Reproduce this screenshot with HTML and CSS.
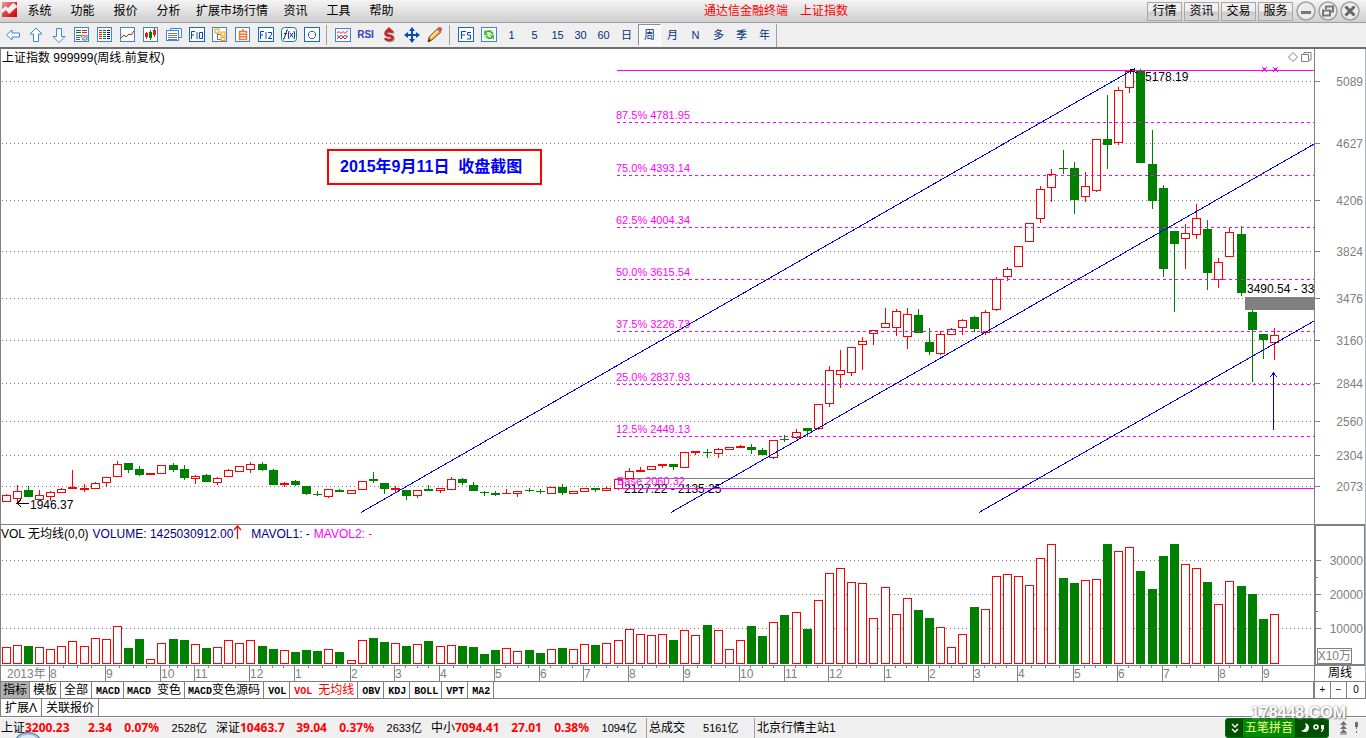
FILE: index.html
```html
<!DOCTYPE html>
<html lang="zh-CN">
<head>
<meta charset="utf-8">
<title>通达信金融终端 上证指数</title>
<link rel="stylesheet" href="styles.css">
</head>
<body>
<div class="app">
  <header class="menubar">
    <svg class="logo" width="16" height="16" viewBox="0 0 16 16"><defs><linearGradient id="lg" x1="0" y1="0" x2="1" y2="1"><stop offset="0" stop-color="#e8a0a0"/><stop offset=".5" stop-color="#d84040"/><stop offset="1" stop-color="#d00000"/></linearGradient></defs><rect width="15" height="15" fill="url(#lg)"/><path d="M0 7l4-3 2 2 5-5h4v4L7 12 4 8l-4 3z" fill="#f6eeee"/><path d="M12 1h3v3z" fill="#d42020"/></svg>
    <nav class="menu">
      <button>系统</button><button>功能</button><button>报价</button><button>分析</button><button class="wide">扩展市场行情</button><button>资讯</button><button>工具</button><button>帮助</button>
    </nav>
    <h1 class="title"><span>通达信金融终端</span><span>上证指数</span></h1>
    <div class="quick"><button>行情</button><button>资讯</button><button>交易</button><button>服务</button></div>
    <div class="winbtns">
      <button aria-label="最小化"><svg width="20" height="20" viewBox="0 0 20 20"><circle cx="10" cy="10" r="9" class="ring"/><path d="M5 11.500h10" stroke="#777" stroke-width="3"/></svg></button>
      <button aria-label="还原"><svg width="20" height="20" viewBox="0 0 20 20"><circle cx="10" cy="10" r="9" class="ring"/><path d="M8 8V5.500h7v5h-3M5 9.500h7v5H5z" fill="none" stroke="#777" stroke-width="2"/></svg></button>
      <button aria-label="关闭"><svg width="20" height="20" viewBox="0 0 20 20"><circle cx="10" cy="10" r="9" class="ring"/><path d="M5.500 5.500l9 9M14.500 5.500l-9 9" stroke="#666" stroke-width="3"/></svg></button>
    </div>
  </header>

  <div class="toolbar">
    <button aria-label="后退"><svg class="ic" viewBox="0 0 16 16"><path d="M1.500 8L7 3v3h7.500v4H7v3z" fill="#fff" stroke="#3a86e0"/></svg></button>
    <button aria-label="上移"><svg class="ic" viewBox="0 0 16 16"><path d="M8 1l6 6h-3.500v7.500h-5V7H2z" fill="#fff" stroke="#3a86e0"/></svg></button>
    <button aria-label="下移"><svg class="ic" viewBox="0 0 16 16"><path d="M8 15.500l6-6h-3.500V1.500h-5v8H2z" fill="#fff" stroke="#3a86e0"/></svg></button>
    <button aria-label="自选"><svg class="ic" viewBox="0 0 16 16"><rect x=".5" y=".5" width="14" height="14" class="fr"/><path d="M2 3.500h5M2 5.500h5" stroke="#008000"/><path d="M8 3.500h5M8 5.500h5" stroke="#e02020"/><path d="M2 8.500h5M2 10.500h4M2 12.500h4" stroke="#555"/><path d="M8 12l5-4v5H9zM11 9l-3-1-1 3" fill="#ddd" stroke="#777"/></svg></button>
    <button aria-label="行情表"><svg class="ic" viewBox="0 0 16 16"><rect x=".5" y=".5" width="14" height="14" class="fr"/><path d="M2 3.500h3M2 5.500h3M2 7.500h3M2 9.500h3M2 11.500h3" stroke="#e02020"/><path d="M6 3.500h3M6 5.500h3M6 7.500h3M6 9.500h3M6 11.500h3" stroke="#008000"/><path d="M10 3.500h3M10 5.500h3M10 7.500h3M10 9.500h3M10 11.500h3" stroke="#0000e0"/></svg></button>
    <button aria-label="分时图"><svg class="ic" viewBox="0 0 16 16"><rect x=".5" y=".5" width="14" height="14" class="fr"/><path d="M1 11l3-3 2 2 3-3 2 1 3-4" fill="none" stroke="#d01818"/></svg></button>
    <button aria-label="K线图"><svg class="ic" viewBox="0 0 16 16"><rect x=".5" y=".5" width="14" height="14" class="fr"/><path d="M2 6h3v4H2zM10 3h3v5h-3z" fill="#e02020"/><path d="M6 5h3v6H6z" fill="#008000"/><path d="M3.500 5v7M11.500 1v9" stroke="#e02020"/><path d="M7.500 3v10" stroke="#008000"/></svg></button>
    <button aria-label="多窗口"><svg class="ic" viewBox="0 0 16 16"><path d="M4.500 3V1.500h11v9H13" fill="#fff" stroke="#3a86e0"/><rect x=".5" y="3.500" width="12" height="10" class="fr"/><path d="M2 6.500h9M2 8.500h9M2 10.500h9M2 12.500h9" stroke="#777"/></svg></button>
    <button aria-label="F10"><svg class="ic" viewBox="0 0 16 16"><rect x=".5" y=".5" width="15" height="14" class="fr2"/><path d="M2.500 12V4.500H6M2.500 8H5M8 5v7M10.500 5.500h3v6h-3z" fill="none" stroke="#0048c8"/></svg></button>
    <button aria-label="板块树"><svg class="ic" viewBox="0 0 16 16"><rect x=".5" y=".5" width="14" height="14" class="fr"/><path d="M5.500 5v7.500H9M5.500 7.500H9" fill="none" stroke="#777"/><rect x="3" y="2" width="4" height="4" fill="#fff0c0" stroke="#f0a020"/><rect x="9" y="5" width="4" height="4" fill="#fff0c0" stroke="#f0a020"/><rect x="9" y="10.500" width="4" height="3" fill="#fff0c0" stroke="#f0a020"/></svg></button>
    <button aria-label="自定义"><svg class="ic" viewBox="0 0 16 16"><rect x=".5" y=".5" width="14" height="14" class="fr"/><path d="M4.500 4.500h7v8h-7zM4.500 7.200h7M4.500 9.800h7M8 2v3" fill="none" stroke="#f07838" stroke-width="1.500"/></svg></button>
    <button aria-label="F12"><svg class="ic" viewBox="0 0 16 16"><rect x=".5" y=".5" width="15" height="14" class="fr2"/><path d="M2.500 12V4.500H6M2.500 8H5M8 5v7M10 5.500h3.500v2L10.500 11.500H14" fill="none" stroke="#0048c8"/></svg></button>
    <button aria-label="公式"><svg class="ic" viewBox="0 0 16 16"><rect x=".5" y=".5" width="15" height="14" rx="3" fill="#fff" stroke="#008888"/><path d="M7 3H6L3 12H2M3 6.500h3M8 4Q6.500 8 8 12M9 6l3 4M12 6l-3 4M13 4q1.500 4 0 8" fill="none" stroke="#102080"/></svg></button>
    <button aria-label="圆环"><svg class="ic" viewBox="0 0 16 16"><rect x=".5" y=".5" width="15" height="14" class="fr2"/><path d="M6.500 4.500h3L11.500 6v3.500L9.500 11.500h-3L4.500 9.500V6z" fill="none" stroke="#2060c0"/></svg></button>
    <i class="sep"></i>
    <button aria-label="指标图"><svg class="ic" viewBox="0 0 16 16"><rect x=".5" y="1.500" width="15" height="13" class="fr"/><path d="M2 6l2-1.500 2 2 2-2 2 2 3-3M2 12l2-2 2 2 2-2 2 2 3-3" fill="none" stroke="#e02020"/><path d="M2 8.500l2 1 2-1 2 1 2-1 3 1" fill="none" stroke="#3060d0"/></svg></button>
    <button class="rsi">RSI</button>
    <button aria-label="资金"><svg class="ic" viewBox="0 0 16 16"><path d="M11.500 5.500Q11 4 8 4T4.500 6 8 8.500t3.500 2.500-3.500 2-4-2" fill="none" stroke="#999" stroke-width="2.500" transform="translate(1 1)"/><path d="M11.500 5.500Q11 4 8 4T4.500 6 8 8.500t3.500 2.500-3.500 2-4-2" fill="none" stroke="#c02828" stroke-width="2.500"/><path d="M8 0l4 4H4z" fill="#c02828"/></svg></button>
    <button aria-label="移动"><svg class="ic" viewBox="0 0 16 16"><path d="M8 0l3 4H5zM8 16l3-4H5zM0 8l4-3v6zM16 8l-4-3v6zM4 7h8v2H4zM7 4h2v8H7z" fill="#0848c0"/></svg></button>
    <button aria-label="画线"><svg class="ic" viewBox="0 0 16 16"><path d="M1 15l1-5L10 2l4 3-9 8z" fill="#f0a030" stroke="#604020" stroke-width=".8"/><path d="M3 10l7-7 2 1.500-7.500 7z" fill="#ffe090"/><path d="M10 2l2-2q3 0 3 3l-1.500 2z" fill="#e05050" stroke="#888" stroke-width=".6"/><path d="M1 15l1-3 2 1.500z" fill="#222"/></svg></button>
    <i class="sep"></i>
    <button aria-label="F5"><svg class="ic" viewBox="0 0 16 16"><rect x=".5" y=".5" width="15" height="14" class="fr2"/><path d="M3.500 12V4.500H8M3.500 8H7M13 5.500H9.500V8H12.500v4H9" fill="none" stroke="#0048c8"/></svg></button>
    <button aria-label="刷新"><svg class="ic" viewBox="0 0 16 16"><rect x=".5" y=".5" width="15" height="14" class="fr"/><rect x="3" y="3" width="10" height="9" fill="#d4efd0"/><path d="M4 6Q5 4 9 4l3 3M12 9q-1 2.500-4 2.500L5 9" fill="none" stroke="#38a838" stroke-width="1.600"/><path d="M3 3v5h4zM13 13V8H9z" fill="#50c040"/></svg></button>
    <button>1</button><button>5</button><button>15</button><button>30</button><button>60</button><button>日</button><button class="on">周</button><button>月</button><button>N</button><button>多</button><button>季</button><button>年</button>
    <i class="sep last"></i>
  </div>

  <main class="chart">
    <section class="pane price">
      <svg class="plot" id="price"></svg>
      <svg class="axis" id="priceAxis"></svg>
      <p class="caption">上证指数 999999(周线.前复权)</p>
      <p class="note">2015年9月11日  收盘截图</p>
      <svg class="corner" width="26" height="12" viewBox="0 0 26 12"><path d="M1.500 6L6 1.500 10.500 6 6 10.500zM14.500 3.500h7v7h-7zM17 3V1.500h7V9h-2" fill="none" stroke="#808080"/></svg>
    </section>
    <section class="pane volume">
      <svg class="plot" id="volume"></svg>
      <svg class="axis boxed" id="volumeAxis"></svg>
      <p class="caption"><span>VOL 无均线(0,0)</span><span class="navy">VOLUME: 1425030912.00<svg width="9" height="14" viewBox="0 0 9 14"><path d="M4.500 14V1M1 5l3.500-4L8 5" fill="none" stroke="#f00" stroke-width="1.200"/></svg></span><span class="navy mv">MAVOL1: -</span><span class="mag">MAVOL2: -</span></p>
      <p class="unit">X10万</p>
    </section>
    <section class="pane time">
      <svg class="plot" id="time"></svg>
      <span class="period">周线</span>
    </section>
  </main>

  <div class="tabs">
    <button class="cur">指标</button><button>模板</button><button>全部</button><button class="en"><b>MACD</b></button><button><b>MACD </b>变色</button><button><b>MACD</b>变色源码</button><button class="en"><b>VOL</b></button><button class="en red"><b>VOL </b>无均线</button><button class="en"><b>OBV</b></button><button class="en"><b>KDJ</b></button><button class="en"><b>BOLL</b></button><button class="en"><b>VPT</b></button><button class="en"><b>MA2</b></button>
    <div class="zoom"><button>+</button><button>−</button><button>0</button></div>
  </div>
  <div class="tabs second"><button>扩展Λ</button><button>关联报价</button></div>

  <footer class="status">
    <div class="idx"><span>上证</span><b>3200.23</b><b class="r">2.34</b><b class="r">0.07%</b><span class="r amt">2528亿</span></div>
    <div class="idx"><span>深证</span><b>10463.7</b><b class="r">39.04</b><b class="r">0.37%</b><span class="r amt">2633亿</span></div>
    <div class="idx"><span>中小</span><b>7094.41</b><b class="r">27.01</b><b class="r">0.38%</b><span class="r amt">1094亿</span></div>
    <div class="cell total"><span>总成交</span><span class="amt">5161亿</span></div>
    <div class="cell"><span>北京行情主站1</span></div>
    <svg class="orb" width="28" height="6" viewBox="0 0 28 6"><ellipse cx="14" cy="12" rx="14" ry="11.500" fill="#a8c4dc" stroke="#4a7090"/><ellipse cx="14" cy="6" rx="8" ry="3" fill="#d8e8f4"/></svg>
    <div class="ime"><svg width="14" height="14" viewBox="0 0 14 14"><path d="M4 3l3 3 3-3M4 8l3 3 3-3" fill="none" stroke="#fff" stroke-width="1.500"/></svg><span>五笔拼音</span><svg width="32" height="14" viewBox="0 0 32 14"><path d="M9 2q3 6-4 8 7 3 8-3 0-4-4-5z" fill="#fff"/><circle cx="20" cy="6" r="2" fill="none" stroke="#fff" stroke-width="1.500"/><path d="M25 4h3v4l-2 3h-1l1-3h-1z" fill="#fff"/></svg></div>
    <svg class="tray" width="22" height="14" viewBox="0 0 22 14"><path d="M4.500 0L8 4H1zM4.500 4L8 8H1zM4.500 8L8 12H1z" fill="#707070"/><path d="M1 13h7" stroke="#707070"/><path d="M16 1h3v5h-3zM17 6h1v2h-1zM17 10h1v2h-1z" fill="#707070"/></svg>
    <span class="mark">178448.COM</span>
  </footer>
</div>
<script src="chart.js"></script>
</body>
</html>
```
FILE: styles.css
```css
* { box-sizing: border-box; }
body {
  margin: 0;
  background: #fff;
  font: 12px/16px "Liberation Sans", "Noto Sans CJK SC", sans-serif;
  color: #000;
}
button {
  font: inherit;
  color: inherit;
  padding: 0;
  border: 0;
  background: none;
  white-space: nowrap;
}
p, h1 { margin: 0; }
svg { display: block; }

.app {
  display: flex;
  flex-direction: column;
  min-height: 100vh;
  overflow: hidden;
}

.menubar {
  display: flex;
  align-items: center;
  height: 23px;
  border-bottom: 1px solid #a0a0a0;
  background: linear-gradient(#f4f4f4, #cfcfcf);
  position: relative;
}
.logo { margin: 0 0 2px 2px; }
.menu { display: flex; flex: 1; }
.menu button { min-width: 43px; }
.menu .wide { padding: 0 6px; }
.title {
  position: absolute;
  left: 0;
  right: 0;
  display: flex;
  justify-content: center;
  gap: 12px;
  padding-left: 186px;
  font-size: 12px;
  font-weight: normal;
  color: #f00;
  pointer-events: none;
}
.quick { display: flex; gap: 2px; }
.quick button {
  width: 35px;
  height: 19px;
  border: 1px solid #a8a8a8;
  background: linear-gradient(#f0f0f0 45%, #cccccc 55%, #d8d8d8);
}
.winbtns { display: flex; gap: 2px; padding: 0 6px 0 3px; }
.ring { fill: #ececec; stroke: #a0a0a0; stroke-width: 1.5; }

.toolbar {
  display: flex;
  align-items: center;
  height: 26px;
  padding-left: 1px;
  background: #efefef;
  border-bottom: 2px solid #707070;
  color: #003080;
}
.toolbar button {
  width: 23px;
  height: 22px;
  display: flex;
  align-items: center;
  justify-content: center;
  font-size: 11px;
}
.ic { width: 16px; height: 16px; }
.fr { fill: #fff; stroke: #3a86e0; }
.fr2 { fill: #fff; stroke: #1068d0; }
.toolbar .rsi { font-weight: bold; font-size: 10px; color: #3040b8; }
.toolbar .on {
  background: #f8f8f8;
  border: 1px solid #fff;
  border-top-color: #909090;
  border-left-color: #909090;
}
.sep { width: 1px; height: 20px; margin: 0 4px 0 3px; background: #a0a0a0; }
.sep.last { height: 23px; margin: 0; }

.chart { border-left: 1px solid #808080; border-right: 1px solid #a8b4bc; }
.pane { display: flex; position: relative; border-bottom: 1px solid #808080; }
.plot { flex: 1; min-width: 0; }
.axis { width: 51px; border-left: 1px solid #808080; }
.axis.boxed { border: 1px solid #808080; border-left-width: 2px; }
.price { height: 476px; }
.volume { height: 141px; }
.time { height: 16px; }
.caption { position: absolute; left: 1px; top: 1px; display: flex; align-items: baseline; white-space: pre; }
.volume .caption { left: 0; top: 0; gap: 4px; }
.caption svg { display: inline-block; vertical-align: -1px; }
.mv { padding-left: 5px; }
.navy { color: #000080; }
.mag { color: #f0f; }
.note {
  position: absolute;
  left: 326px;
  top: 100px;
  padding: 8px 18px 8px 11px;
  border: 2px solid #f00;
  background: #fffffa;
  color: #00f;
  font-size: 16px;
  font-weight: bold;
  white-space: pre;
}
.corner { position: absolute; right: 52px; top: 2px; }
.unit {
  position: absolute;
  right: 13px;
  bottom: 1px;
  border: 1px solid #808080;
  color: #808080;
  background: #fff;
  line-height: 14px;
}
.period { width: 51px; border-left: 1px solid #808080; text-align: center; line-height: 15px; }

.plot text, .axis text { font: 12px "Liberation Sans", "Noto Sans CJK SC", sans-serif; fill: #808080; }
.plot .black { fill: #000; }
.plot .fib { font-size: 11px; fill: #f0f; }
.crisp { shape-rendering: crispEdges; }

.tabs {
  display: flex;
  height: 17px;
  border-left: 1px solid #808080;
  border-bottom: 1px solid #808080;
}
.tabs button { padding: 0 3px; border-right: 1px solid #808080; line-height: 16px; }
.tabs .en { padding-left: 4px; }
.tabs b { font: bold 10px "Liberation Mono", monospace; white-space: pre; }
.tabs .cur { padding: 0 2px; background: #b0b0b0; }
.tabs .red { color: #f00; }
.zoom { display: flex; margin-left: auto; border-left: 2px solid #808080; }
.zoom button { width: 16px; text-align: center; font-size: 10px; }
.zoom button:last-child { width: 19px; }
.tabs.second { height: 18px; }
.tabs.second button { padding: 0 4px; }

.status {
  flex: 1;
  display: flex;
  align-items: center;
  min-height: 21px;
  padding-left: 1px;
  background: #efefef;
  border-top: 1px solid #fff;
  position: relative;
  white-space: nowrap;
}
.idx { display: grid; grid-template-columns: 24px 47px 40px 47px 48px; width: 215px; align-items: baseline; }
.idx b { font-family: "Noto Sans", sans-serif; color: #f00; }
.idx .r { text-align: right; }
.amt { font-size: 11px; }
.cell { display: flex; align-items: center; height: 20px; padding-left: 2px; border-left: 1px solid #a0a0a0; }
.total { width: 108px; gap: 18px; }
.orb { position: absolute; left: 14px; bottom: 0; }
.ime {
  display: flex;
  align-items: center;
  margin-left: auto;
  height: 20px;
  width: 104px;
  padding-left: 2px;
  border: 1px solid #007010;
  border-radius: 3px;
  background: #005000;
  color: #ff9;
}
.ime span { background: #008c00; padding: 1px 2px; border: 1px solid #003800; border-width: 0 1px; }
.tray { margin: 0 5px 0 10px; }
.mark {
  position: absolute;
  right: 20px;
  top: -15px;
  font: bold 16px/20px "Liberation Sans", sans-serif;
  color: #fff;
  text-shadow: 0 0 2px #888, 1px 1px 2px #777;
}
```
FILE: chart.js
```js
// Weekly bars: colour, high, open/close top, open/close bottom, low, volume top (window rows).
const BARS = `r 494 495 501 501 647|r 485 491 498 502 645|g 486 490 496 496 646|r 490 495 499 499 647|r 491 492 496 500 649|r 488 489 492 492 646|r 470 487 488 488 641|r 484 488 489 491 646|r 482 483 488 488 638|r 477 477 482 486 639
r 461 464 476 476 626|g 463 463 469 472 648|g 466 469 474 475 639|r 473 473 474 474 659|r 465 465 473 473 643|g 463 465 469 471 639|g 465 469 477 479 640|r 475 476 478 483 644|g 474 475 481 481 648|r 477 478 482 484 647
r 469 470 476 476 640|r 466 466 471 471 643|r 462 464 469 472 640|g 462 464 469 470 646|g 469 470 484 484 649|r 482 483 484 486 650|g 480 481 484 485 652|g 486 486 493 494 650|g 491 494 494 495 651|r 489 489 496 497 649
g 489 490 491 491 652|r 490 490 493 493 660|r 481 481 489 489 640|g 472 479 480 482 638|g 483 483 488 493 642|r 486 488 489 492 643|g 490 490 495 499 646|r 490 490 495 497 644|g 485 489 490 490 641|r 488 488 490 492 646
r 477 479 489 489 645|g 478 479 482 484 646|g 482 485 490 490 647|g 491 492 492 495 654|g 491 493 494 495 650|r 489 493 493 493 648|r 491 491 493 496 651|g 488 490 490 491 650|g 489 491 491 493 653|r 487 487 493 493 649
g 484 487 492 494 648|r 491 491 493 493 649|r 488 488 491 491 644|g 488 488 489 491 645|r 487 488 490 490 643|r 479 479 488 489 640|r 468 471 478 478 629|r 467 470 471 471 634|r 466 466 469 469 635|r 464 464 465 467 634
g 464 464 466 469 640|r 452 452 467 467 630|r 451 451 452 454 635|g 449 452 452 457 625|r 448 449 453 457 630|r 447 447 449 449 649|r 445 446 447 447 640|g 444 447 449 453 626|g 448 450 454 454 636|r 440 440 457 458 622
g 435 439 439 441 615|r 429 432 437 438 612|g 428 428 430 436 629|r 404 404 428 429 600|r 366 370 403 406 573|r 350 370 374 387 568|r 347 347 372 375 582|r 337 341 344 369 583|r 330 330 333 344 618|r 308 323 327 327 587
r 309 311 327 335 614|r 308 314 336 348 598|g 309 315 332 332 610|g 328 342 351 354 618|r 331 334 353 354 627|r 328 329 334 334 647|r 319 320 327 334 634|g 316 317 328 331 607|r 310 312 332 334 609|r 277 279 309 310 576
r 267 269 276 280 574|r 246 246 266 266 576|r 223 223 241 241 585|r 186 189 218 222 558|r 169 174 187 201 544|g 150 168 168 173 578|g 162 168 199 213 583|r 172 186 196 201 580|r 139 139 190 191 579|g 95 139 144 168 544
r 87 90 142 144 551|r 71 71 87 92 547|g 69 71 162 162 571|g 130 164 200 208 589|g 185 188 268 276 556|g 231 231 243 311 544|r 224 233 238 268 564|r 204 218 234 238 568|g 220 229 272 289 582|r 258 262 279 287 604
r 228 232 256 256 581|g 226 234 292 295 586|g 310 312 329 381 594|g 334 334 339 358 619|r 328 335 342 359 614`
  .split(/[|\n]/).map(s => s.split(" ").map((v, i) => i ? +v : v));

const GREY = "#808080", RED = "#ff0000", GREEN = "#008000", PINK = "#ff00ff", BLUE = "#0000ee";
const box = (x, y, w, h, fill) => `<rect x="${x}" y="${y}" width="${w}" height="${h}" fill="${fill}"/>`;
const line = (x1, y1, x2, y2, stroke, extra = "") =>
  `<line x1="${x1}" y1="${y1}" x2="${x2}" y2="${y2}" stroke="${stroke}" ${extra}/>`;
const text = (x, y, s, cls = "") => `<text x="${x}" y="${y}" class="${cls}">${s}</text>`;
const put = (id, top, body) => {
  document.getElementById(id).innerHTML = `<g transform="translate(-1 ${-top})">${body}</g>`;
};
const crisp = s => `<g class="crisp">${s}</g>`;
const centre = i => 6 + Math.floor(11.125 * i + 0.2);
const hollow = (x, y, b) =>
  `<rect x="${x - 3.5}" y="${y + 0.5}" width="8" height="${b - y}" fill="#fff" stroke="${RED}"/>`;
const dots = y => line(2, y + 0.5, 2000, y + 0.5, GREY, 'stroke-dasharray="1 3"');

// Price pane
const prices = [[81, 5089], [143, 4627], [200, 4206], [251, 3824], [298, 3476], [340, 3160], [383, 2844], [421, 2560], [455, 2304], [486, 2073]];
const fibs = [[122, "87.5% 4781.95"], [175, "75.0% 4393.14"], [227, "62.5% 4004.34"], [279, "50.0% 3615.54"], [331, "37.5% 3226.73"], [384, "25.0% 2837.93"], [436, "12.5% 2449.13"]];

const candle = ([c, high, top, bottom, low], i) => {
  const x = centre(i), col = c === "r" ? RED : GREEN;
  let s = box(x, high, 1, low - high + 1, col);
  s += c === "r" && bottom - top > 1 ? hollow(x, top, bottom) : box(x - 4, top, 9, bottom - top + 1, col);
  return s;
};

put("price", 49,
  crisp(prices.map(p => dots(p[0])).join("") +
    line(617, 478.5, 2000, 478.5, GREY) +
    BARS.map(candle).join("") +
    box(1245, 297, 900, 13, GREY)) +
  text(624, 493, "2127.22 - 2135.25", "black") +
  text(1247, 293, "3490.54 - 33", "black") +
  text(1145, 81, "5178.19", "black") +
  text(30, 509, "1946.37", "black") +
  fibs.map(f => text(616, f[0] - 3, f[1], "fib")).join("") +
  text(617, 485, "Base 2060.32", "fib") +
  crisp(fibs.map(f => line(617, f[0] + 0.5, 2000, f[0] + 0.5, PINK, 'stroke-dasharray="3 3"')).join("") +
    line(617, 70.5, 2000, 70.5, PINK) + line(617, 488.5, 2000, 488.5, PINK) +
    line(361, 512.5, 1135, 68.5, BLUE) + line(671, 512.5, 1315, 143.5, BLUE) + line(979, 512.5, 1315, 320.5, BLUE) +
    box(1273, 373, 1, 57, BLUE) +
    `<path d="M1270 377l3.500-4 3.500 4" fill="none" stroke="${BLUE}"/>` +
    `<path d="M17 503.500h12M21 499.500l-4 4 4 3M1130 74v-4l7 3M1130 70l5-1" fill="none" stroke="#000"/>` +
    box(1263, 68, 3, 3, PINK) + box(1274, 68, 3, 3, PINK) +
    `<path d="M1262 67l5 5M1267 67l-5 5M1273 67l5 5M1278 67l-5 5" stroke="${PINK}"/>`));

const axisMarks = (marks, w) => marks.map(([y, v]) =>
  crisp(line(0, y + 0.5, 6, y + 0.5, GREY)) + `<text x="${w}" y="${y + 5}" text-anchor="end">${v}</text>`).join("");
put("priceAxis", 49, axisMarks(prices, 49));

// Volume pane
const volumes = [[560, 30000], [594, 20000], [628, 10000]];
put("volume", 525, crisp(volumes.map(v => dots(v[0])).join("") + BARS.map((b, i) => {
  const x = centre(i);
  return b[0] === "r" ? hollow(x, b[5], 663) : box(x - 4, b[5], 9, 664 - b[5], GREEN);
}).join("")));
put("volumeAxis", 526, axisMarks(volumes, 48) +
  crisp([577, 611].map(y => line(0, y + 0.5, 3, y + 0.5, GREY)).join("")));

// Month scale, each month split in four
const months = [[49, 8], [105, 9], [160, 10], [194, 11], [249, 12], [294, 1], [350, 2], [394, 3], [439, 4], [494, 5], [539, 6], [583, 7], [628, 8], [683, 9], [739, 10], [784, 11], [828, 12], [884, 1], [928, 2], [973, 3], [1017, 4], [1073, 5], [1117, 6], [1162, 7], [1218, 8], [1262, 9]];
put("time", 666, text(7, 678, "2013年") + months.map(([x, m], i) => {
  const next = months[i + 1];
  let s = box(x, 666, 1, 15, GREY);
  if (next) for (let k = 1; k < 4; k++) s += box(Math.round(x + (next[0] - x) * k / 4), 666, 1, 2, GREY);
  return crisp(s) + text(x + 1, 678, m);
}).join(""));
```
